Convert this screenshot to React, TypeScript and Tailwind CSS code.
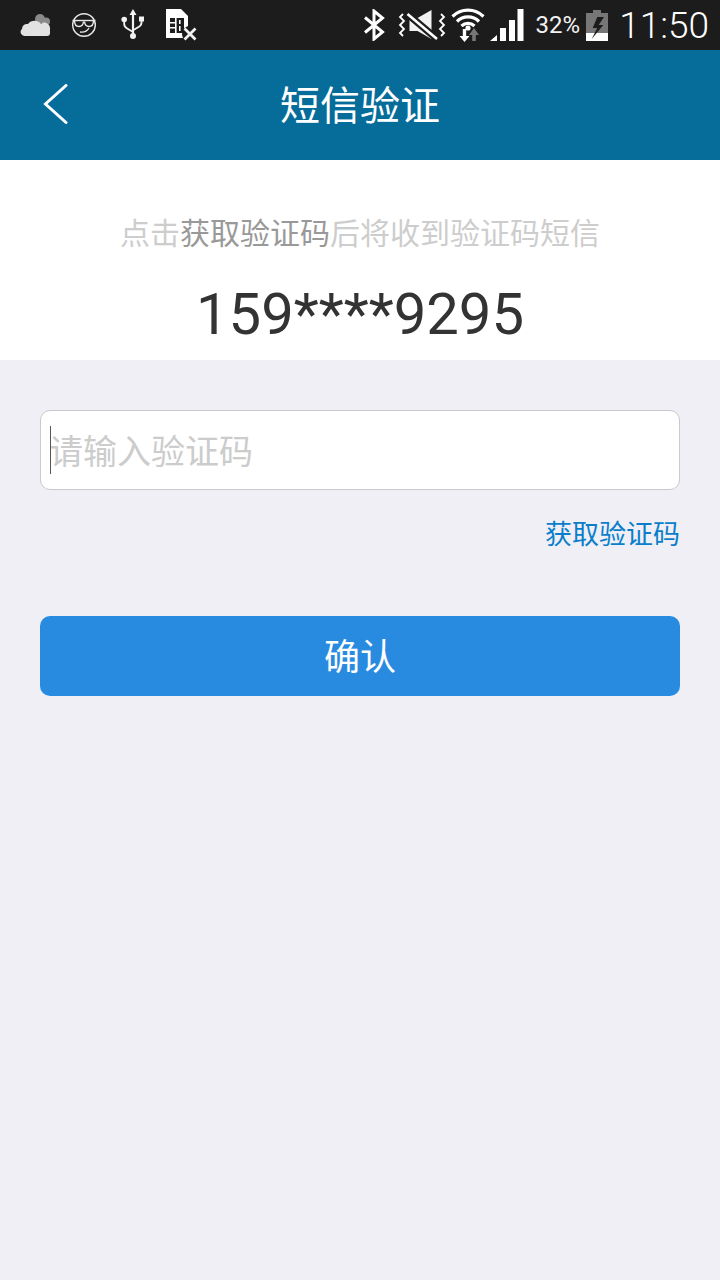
import React from 'react';

const cjk = "font-['Roboto','Noto_Sans_CJK_SC',sans-serif]";

const StatusLeft = () => (
  <div className="flex items-center">
    {/* cloud */}
    <svg width="32" height="26" viewBox="0 0 32 26" className="ml-[20px]">
      <circle cx="20" cy="7" r="5" fill="#8a8a8a" />
      <circle cx="26" cy="9.5" r="4" fill="#8a8a8a" />
      <path d="M5 24 a4 4 0 0 1 -3 -7 a5 5 0 0 1 6 -5 a8 8 0 0 1 13 0 a5.5 5.5 0 0 1 9 5 v4 a3 3 0 0 1 -3 3 z" fill="#e2e2e2" />
    </svg>
    {/* sunglasses face */}
    <svg width="26" height="26" viewBox="0 0 26 26" className="ml-[19px]" fill="none" stroke="#e8e8e8" strokeWidth="1.4">
      <circle cx="13" cy="13" r="11.3" />
      <path d="M1.5 8.5 h23" />
      <path d="M3.5 8.5 q0 6 4.5 6 q4 0 4.5 -5 M13.5 9.5 q0.5 5 4.5 5 q4.5 0 4.5 -6" />
      <path d="M9 20 q6 1 9 -4" />
    </svg>
    {/* usb */}
    <svg width="24" height="32" viewBox="0 0 24 32" className="ml-[24px]" fill="#f2f2f2">
      <path d="M12 0 l3.5 6 h-2.4 v20 h-2.2 v-20 h-2.4 z" />
      <circle cx="12" cy="27" r="3" />
      <circle cx="3.2" cy="10.5" r="2.8" />
      <rect x="18" y="7.5" width="5" height="5" />
      <path d="M3.2 12 v3 q0 3 3 4.5 l5 3" fill="none" stroke="#f2f2f2" strokeWidth="1.8" />
      <path d="M20.5 12 v1.5 q0 3 -3 4.5 l-5 3" fill="none" stroke="#f2f2f2" strokeWidth="1.8" />
    </svg>
    {/* sim with x */}
    <svg width="32" height="33" viewBox="0 0 32 33" className="ml-[21px]">
      <path d="M0 0 h15 l7 7 v22 h-22 z" fill="#fff" />
      <rect x="4" y="9" width="14" height="15" fill="#1c1c1c" />
      <path d="M4 13 h5 v1.6 h-5z M4 18 h5 v1.6 h-5z M9 9 h1.6 v15 h-1.6z M13 11 h1.6 v4 h-1.6z M13 17 h1.6 v5 h-1.6z" fill="#fff" />
      <circle cx="24" cy="25" r="8" fill="#1c1c1c" />
      <path d="M18.5 19.5 L29.5 30.5 M29.5 19.5 L18.5 30.5" stroke="#f2f2f2" strokeWidth="2.8" />
    </svg>
  </div>
);

const StatusRight = () => (
  <div className="flex items-center">
    {/* bluetooth */}
    <svg width="22" height="32" viewBox="0 0 22 32" fill="none" stroke="#fff" strokeWidth="3">
      <path d="M2 8.5 L19.5 23 L11 30 V2 L19.5 9 L2 23.5" />
    </svg>
    {/* vibrate + mute */}
    <svg width="48" height="32" viewBox="0 0 48 32" className="ml-[13px]" fill="none">
      <path d="M5 5 L2 8 L6 12 L2 16 L6 20 L2 24 L5 27" stroke="#fff" strokeWidth="1.8" />
      <path d="M43 5 L46 8 L42 12 L46 16 L42 20 L46 24 L43 27" stroke="#fff" strokeWidth="1.8" />
      <path d="M11.5 9 h8 l14 -8 v29 l-14 -8 h-8 z" fill="#f2f2f2" />
      <path d="M9.5 5 L39 30" stroke="#1c1c1c" strokeWidth="7" />
      <path d="M9.5 5 L39 30" stroke="#fff" strokeWidth="2.6" />
    </svg>
    {/* wifi */}
    <svg width="36" height="36" viewBox="0 0 36 36" className="ml-[4px]" fill="none">
      <path d="M2.5 9.5 a22 22 0 0 1 31 0" stroke="#fff" strokeWidth="3.2" />
      <path d="M7 14.5 a15.5 15.5 0 0 1 22 0" stroke="#fff" strokeWidth="3.2" />
      <path d="M11.5 19 a9.5 9.5 0 0 1 13 0" stroke="#fff" strokeWidth="3.2" />
      <circle cx="18" cy="21" r="2.6" fill="#fff" />
      <path d="M12.8 22 h3.4 v7 h3.3 l-5 6 l-5 -6 h3.3z" fill="#fff" />
      <path d="M24 21 l5 7 h-3.2 v6 h-3.6 v-6 h-3.2z" fill="#777" />
    </svg>
    {/* signal */}
    <svg width="34" height="32" viewBox="0 0 34 32" className="ml-[4px]" fill="#fff">
      <path d="M0 32 L7 26 V32 Z" />
      <rect x="10" y="19" width="6" height="13" />
      <rect x="19" y="11" width="6" height="21" />
      <rect x="27.5" y="0" width="6" height="32" />
    </svg>
  </div>
);

export default function App() {
  return (
    <div className={`w-[720px] h-[1280px] bg-[#efeff5] flex flex-col ${cjk}`}>
      {/* status bar */}
      <div className="h-[50px] bg-[#1c1c1c] flex items-center justify-between shrink-0">
        <StatusLeft />
        <div className="flex items-center">
          <StatusRight />
          <span className="ml-[12px] text-[24px] leading-none text-[#f2f2f2] font-['Roboto',sans-serif]">32%</span>
          <svg width="22" height="31" viewBox="0 0 22 31" className="ml-[6px]">
            <path d="M0 3 h7 v-3 h8 v3 h7 v20 h-22z" fill="#777" />
            <rect y="23" width="22" height="8" fill="#fff" />
            <path d="M11.3 7 H18 L12.7 15 H17.3 L5.7 29 L11.3 18 H6.7 Z" fill="#1c1c1c" />
          </svg>
          <span className="ml-[11px] mr-[11px] text-[37px] leading-none font-light text-white font-['Roboto',sans-serif]">11:50</span>
        </div>
      </div>

      {/* header */}
      <div className="relative h-[110px] bg-[#066c99] flex items-center justify-center shrink-0">
        <svg width="26" height="42" viewBox="0 0 26 42" fill="none" stroke="#fff" strokeWidth="3" strokeLinecap="round" className="absolute left-[43px] top-[34px]">
          <path d="M23 1.5 L2.5 20 L23 38.5" />
        </svg>
        <span className="text-[40px] leading-none text-white pt-[4px]">短信验证</span>
      </div>

      {/* info */}
      <div className="h-[200px] bg-white flex flex-col items-center shrink-0">
        <p className="mt-[58px] text-[30px] leading-[32px] text-[#cdcdcd]">
          点击<span className="text-[#999999]">获取验证码</span>后将收到验证码短信
        </p>
        <p className="mt-[32px] text-[58px] leading-[64px] text-[#333333]">159****9295</p>
      </div>

      {/* form */}
      <div className="px-[40px] pt-[50px] flex flex-col">
        <div className="relative h-[80px] bg-white border border-[#c9c9ce] rounded-[10px] flex items-center pl-[8px]">
          <div className="absolute left-[9px] top-[15px] w-px h-[48px] bg-[#555555]" />
          <span className="text-[34px] leading-none text-[#cccccc] pt-[4px]">请输入验证码</span>
        </div>
        <div className="flex justify-end mt-[28px]">
          <span className="text-[27px] leading-[34px] text-[#0a7ecb]">获取验证码</span>
        </div>
        <div className="mt-[64px] h-[80px] rounded-[10px] bg-[#288be0] flex items-center justify-center">
          <span className="text-[36px] leading-none text-white pt-[4px]">确认</span>
        </div>
      </div>
    </div>
  );
}
